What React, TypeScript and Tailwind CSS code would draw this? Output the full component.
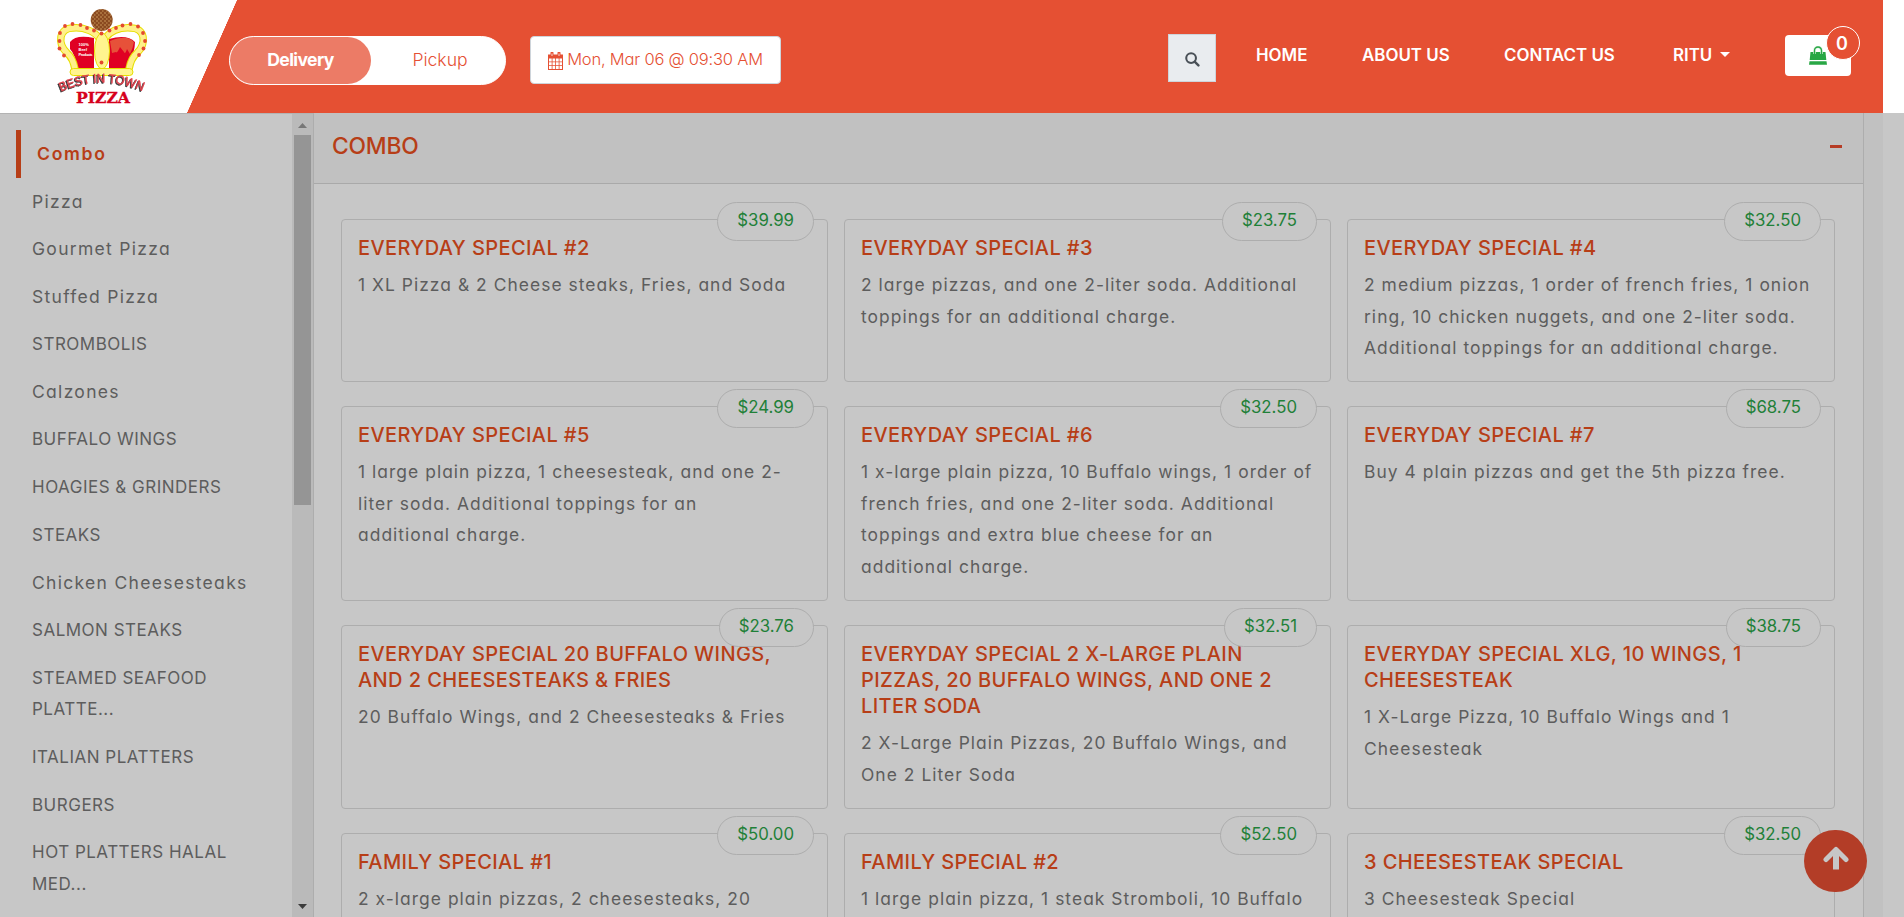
const menu = ["Pizza", "Gourmet Pizza", "Stuffed Pizza", "STROMBOLIS", "Calzones", "BUFFALO WINGS", "HOAGIES & GRINDERS", "STEAKS", "Chicken Cheesesteaks", "SALMON STEAKS", "STEAMED SEAFOOD\nPLATTE...", "ITALIAN PLATTERS", "BURGERS", "HOT PLATTERS HALAL\nMED..."];

const specials = [
  ["$39.99", "EVERYDAY SPECIAL #2", "1 XL Pizza & 2 Cheese steaks, Fries, and Soda"],
  ["$23.75", "EVERYDAY SPECIAL #3", "2 large pizzas, and one 2-liter soda. Additional\ntoppings for an additional charge."],
  ["$32.50", "EVERYDAY SPECIAL #4", "2 medium pizzas, 1 order of french fries, 1 onion\nring, 10 chicken nuggets, and one 2-liter soda.\nAdditional toppings for an additional charge."],
  ["$24.99", "EVERYDAY SPECIAL #5", "1 large plain pizza, 1 cheesesteak, and one 2-\nliter soda. Additional toppings for an\nadditional charge."],
  ["$32.50", "EVERYDAY SPECIAL #6", "1 x-large plain pizza, 10 Buffalo wings, 1 order of\nfrench fries, and one 2-liter soda. Additional\ntoppings and extra blue cheese for an\nadditional charge."],
  ["$68.75", "EVERYDAY SPECIAL #7", "Buy 4 plain pizzas and get the 5th pizza free."],
  ["$23.76", "EVERYDAY SPECIAL 20 BUFFALO WINGS,\nAND 2 CHEESESTEAKS & FRIES", "20 Buffalo Wings, and 2 Cheesesteaks & Fries"],
  ["$32.51", "EVERYDAY SPECIAL 2 X-LARGE PLAIN\nPIZZAS, 20 BUFFALO WINGS, AND ONE 2\nLITER SODA", "2 X-Large Plain Pizzas, 20 Buffalo Wings, and\nOne 2 Liter Soda"],
  ["$38.75", "EVERYDAY SPECIAL XLG, 10 WINGS, 1\nCHEESESTEAK", "1 X-Large Pizza, 10 Buffalo Wings and 1\nCheesesteak"],
  ["$50.00", "FAMILY SPECIAL #1", "2 x-large plain pizzas, 2 cheesesteaks, 20"],
  ["$52.50", "FAMILY SPECIAL #2", "1 large plain pizza, 1 steak Stromboli, 10 Buffalo"],
  ["$32.50", "3 CHEESESTEAK SPECIAL", "3 Cheesesteak Special"],
];

const pearls = [[59.5, 41], [60, 33], [65, 26], [72.5, 24], [80.5, 25], [87, 28], [94, 30.5], [109.5, 30.5], [116, 28], [122.5, 25.5], [130.5, 24], [138, 26.5], [143, 33], [145, 41], [143.5, 48.5], [139, 55], [59.5, 48.5], [64, 55.5], [101.5, 33.5], [101.5, 62.5]];

function Logo() {
  return (
    <svg className="h-[113px] w-[237px] shrink-0" viewBox="0 0 237 113">
      <defs>
        <pattern id="crust" width="4" height="4" patternUnits="userSpaceOnUse">
          <rect width="4" height="4" fill="#8a4a20" />
          <path d="M0 1h2M2 3h1.500" stroke="#c99557" strokeWidth="1" />
        </pattern>
        <path id="arc" d="M61 91.500Q102 73.500 143 91.500" />
      </defs>
      <circle cx="101.700" cy="20" r="11" fill="url(#crust)" />
      <path d="M70 42Q76 34 94 38V68H76Q76 55 70 49ZM109 39Q127 34 135 42Q135 52 128 68H109Z" fill="#e00023" />
      <path d="M110 41Q127 34 134 42Q133 48 130 54L127 49Q125 55 124 52L120 47Q117 54 116 52L112 53Z" fill="#e75139" />
      <path d="M75 69Q73 58 67 53C57 43 59 28 73 28C85 27 95 32 99 38M129 69Q131 58 137 53C147 43 145 28 131 28C118 27 110 32 105 38" fill="none" stroke="#e6df00" strokeWidth="7.500" />
      <path d="M75 69Q73 58 67 53C57 43 59 28 73 28C85 27 95 32 99 38M129 69Q131 58 137 53C147 43 145 28 131 28C118 27 110 32 105 38" fill="none" stroke="#fff08a" strokeWidth="5.500" />
      <ellipse cx="102" cy="51" rx="7.500" ry="18" fill="#fff48f" stroke="#e6df00" />
      <rect x="70" y="68.500" width="63" height="7" rx="3.500" fill="#fff48f" stroke="#e6df00" />
      {pearls.map(([x, y], i) => <circle key={i} cx={x} cy={y} r="1.900" fill="#e4492f" />)}
      <g fill="#fff" fontFamily="Liberation Sans" fontSize="4" fontWeight="700">
        <text x="78.500" y="46">100%</text><text x="78.500" y="51">Beef</text><text x="78.500" y="56" textLength="14">Products</text>
      </g>
      <text className="drop-shadow-[-1px_1px_0_#333]" fontFamily="Liberation Sans" fontSize="12.500" fontWeight="400" fill="#e0404c" stroke="#e0404c" strokeWidth=".400"><textPath href="#arc" textLength="84" lengthAdjust="spacingAndGlyphs">BEST IN TOWN</textPath></text>
      <text x="76" y="102.500" fontFamily="DejaVu Serif" fontSize="14" fontWeight="700" fill="#d6001c" stroke="#d6001c" strokeWidth=".300" textLength="54" lengthAdjust="spacingAndGlyphs">PIZZA</text>
    </svg>
  );
}

function Header() {
  return (
    <header className="flex h-[113px] w-[1883px] shrink-0 bg-[linear-gradient(113.9deg,#fff_0_216.5px,#e55033_217px)] text-white">
      <Logo />
      <div className="flex w-full items-start">
        <div className="-ml-2 mt-9 flex h-[49px] w-[277px] rounded-full border border-white bg-white text-[17.6px] leading-[46px]">
          <div className="w-[141px] rounded-full bg-[#ec7b66] text-center font-bold tracking-[-0.6px]">Delivery</div>
          <div className="flex-1 pl-1 text-center font-light text-[#e55033]">Pickup</div>
        </div>
        <div className="ml-6 mt-9 flex h-12 w-[251px] items-center justify-center gap-1 whitespace-nowrap rounded border border-[#ced4da] bg-white pb-0.5 text-[16.5px] font-light tracking-[-0.2px] text-[#e55033]">
          <svg className="mt-1 h-[18px] w-[15px]" viewBox="0 0 15 18" fill="currentColor"><path d="M0 2.500h2.500V1a1.500 1.500 0 0 1 3 0v1.500h4V1a1.500 1.500 0 0 1 3 0v1.500H15V18H0Z" /><g fill="#fff"><path d="M1 6.500h2.700v3H1zM4.500 6.500h2.700v3H4.500zM8 6.500h2.700v3H8zM11.500 6.500H14v3h-2.500zM1 10.300h2.700v3H1zM4.500 10.300h2.700v3H4.500zM8 10.300h2.700v3H8zM11.500 10.300H14v3h-2.500zM1 14.100h2.700V17H1zM4.500 14.100h2.700V17H4.500zM8 14.100h2.700V17H8zM11.500 14.100H14V17h-2.500zM3.600 1.500h.8v2.500h-.8zM10.600 1.500h.8v2.500h-.8z" /></g></svg>
          Mon, Mar 06 @ 09:30 AM
        </div>
        <div className="ml-[387px] mt-[34px] flex size-12 items-center justify-center border border-[#ced4da] bg-[#e9ecef] text-[#495057]">
          <svg className="mt-0.5 size-[15px]" viewBox="0 0 16 16" fill="none" stroke="currentColor"><circle cx="6.500" cy="6.500" r="5.200" strokeWidth="2.200" /><path d="m10.300 10.300 4 4" strokeWidth="2.600" strokeLinecap="round" /></svg>
        </div>
        <nav className="ml-10 mt-[43px] flex whitespace-nowrap text-[16.9px] font-semibold leading-6">
          <span className="w-[106px]">HOME</span><span className="w-[142px]">ABOUT US</span><span className="w-[169px]">CONTACT US</span>
          <span className="flex w-[112px] items-center gap-2">RITU<svg className="mb-0.5 h-[5px] w-[10px]" viewBox="0 0 10 5" fill="currentColor"><path d="M0 0h10L5 5Z" /></svg></span>
        </nav>
        <div className="relative mt-[35px] flex h-[41px] w-[66px] items-center justify-center rounded bg-white">
          <svg viewBox="0 0 18 19" className="h-[19px] w-[18px] text-[#28a745]" fill="currentColor"><path d="M1.500 6h15L17.300 14H.700ZM.500 15.200h17l.500 3.600H0Z" /><path d="M5.500 8V4.500a3.500 3.500 0 0 1 7 0V8" fill="none" stroke="#d8f0dd" strokeWidth="2.600" /><path d="M5.500 8V4.500a3.500 3.500 0 0 1 7 0V8" fill="none" stroke="currentColor" strokeWidth="1.300" /></svg>
          <span className="absolute -top-[9px] left-[41px] flex size-[34px] items-center justify-center rounded-full border border-white bg-[#e55033] pr-0.5 text-[18px] font-semibold">0</span>
        </div>
      </div>
    </header>
  );
}

function Sidebar() {
  return (
    <aside className="flex w-[314px] shrink-0 border-r border-t border-r-[#adadad] border-t-[#b3b3b3]">
      <div className="w-[292px] pt-4 text-[17px] leading-[31.68px] text-[#5d5d5d]">
        <div className="ml-4 border-l-[5px] border-[#b73e17] py-2 pl-4 text-[17.6px] font-semibold tracking-[1.7px] text-[#b73e17]">Combo</div>
        {menu.map((item) => (
          <div key={item} className={item === item.toUpperCase() ? "whitespace-pre py-2 pl-8 tracking-[0.5px]" : "whitespace-pre py-2 pl-8 text-[17.5px] tracking-[1.3px]"}>{item}</div>
        ))}
      </div>
      <div className="flex w-[21px] flex-col items-center bg-[#bababa]">
        <svg className="h-[21px] w-[17px] shrink-0" viewBox="0 0 17 21"><path d="M4 14h9L8.500 9Z" fill="#777" /></svg>
        <div className="h-[370px] w-[17px] bg-[#959595]" />
        <svg className="mt-auto h-[21px] w-[17px] shrink-0" viewBox="0 0 17 21"><path d="M4 8h9L8.500 13Z" fill="#3b3b3b" /></svg>
      </div>
    </aside>
  );
}

export default function App() {
  return (
    <div className="relative flex h-[917px] w-[1904px] flex-col overflow-hidden bg-white font-[Inter,sans-serif] [font-feature-settings:'cv11']">
      <Header />
      <div className="flex min-h-0 flex-1 overflow-hidden bg-[#c7c7c7]">
        <Sidebar />
        <main className="w-[1550px] shrink-0 border-r border-[#adadad]">
          <div className="flex h-[71px] items-center justify-between border-b border-[#a9a9a9] bg-[#c1c1c1] pb-1 pl-[18px] pr-[21px]">
            <h1 className="text-[22.8px] font-medium tracking-[-0.2px] text-[#b73e17]">COMBO</h1>
            <span className="h-[3px] w-3 bg-[#b63c25]" />
          </div>
          <div className="ml-[27px] mt-[35px] grid w-[1494px] grid-cols-[487px_487px_488px] grid-rows-[163px_195px_184px_180px] gap-x-4 gap-y-6">
            {specials.map(([price, title, text]) => (
              <article key={title} className="relative rounded border border-[#adadad] px-4 pt-[15px]">
                <span className="absolute -top-[18px] right-[13px] flex h-[39px] items-center rounded-full border border-[#adadad] bg-[#c7c7c7] px-[19px] pb-px text-[16.8px] text-[#1f8038]">{price}</span>
                <h2 className="whitespace-pre text-[20px] font-medium leading-[26px] tracking-[0.4px] text-[#b73e17]">{title}</h2>
                <p className="mt-2 whitespace-pre text-[17.4px] leading-[31.5px] tracking-[1.05px] text-[#5d5d5d]">{text}</p>
              </article>
            ))}
          </div>
        </main>
        <div className="w-[19px] shrink-0 bg-[#c1c1c1]" />
      </div>
      <button className="absolute left-[1804px] top-[830px] flex h-[62px] w-[63px] items-center justify-center rounded-full bg-[#b33d27] text-[#c7c7c7]">
        <svg className="mb-1.5 h-6 w-[26px]" viewBox="0 0 26 24" fill="none" stroke="currentColor"><path d="M13 23.500V5" strokeWidth="6" /><path d="M3 13.500 13 3.500l10 10" strokeWidth="5" strokeLinecap="round" strokeLinejoin="round" /></svg>
      </button>
    </div>
  );
}
